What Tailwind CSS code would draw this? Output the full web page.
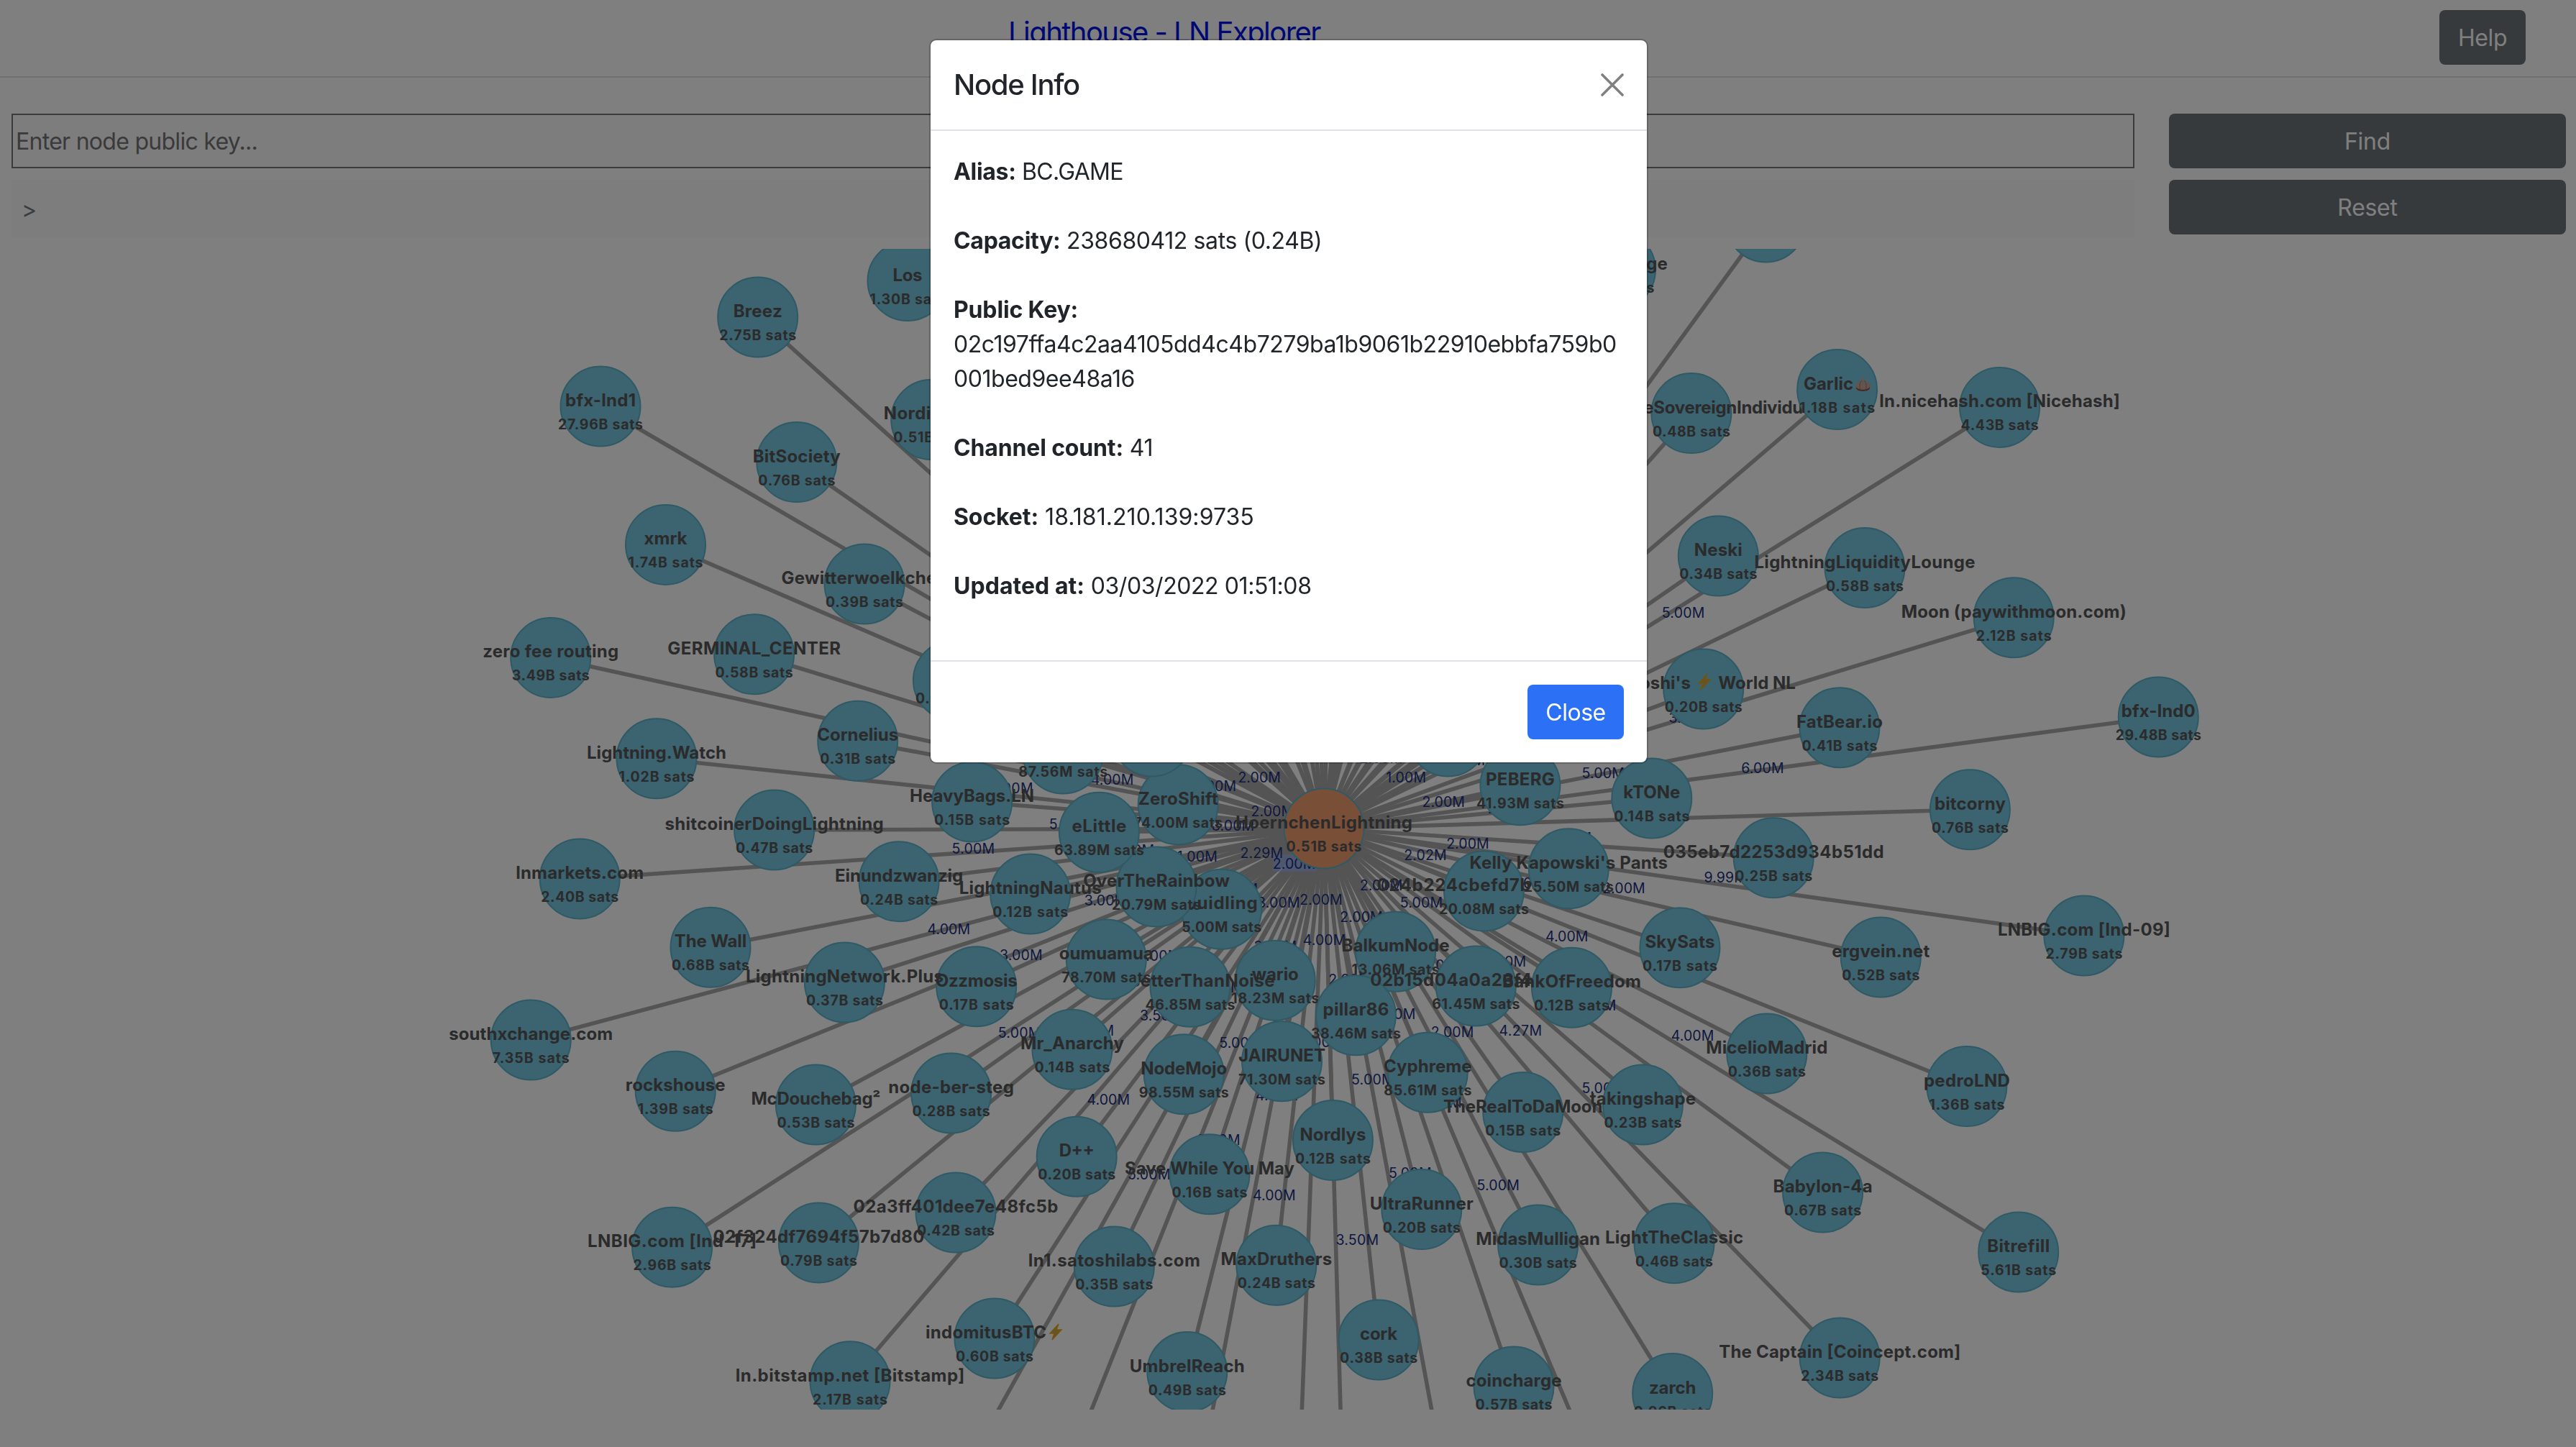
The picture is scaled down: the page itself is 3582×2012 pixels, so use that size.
<!DOCTYPE html>
<html lang="en">
<head>
<meta charset="utf-8">
<title>Lighthouse - LN Explorer</title>
<script src="https://cdn.jsdelivr.net/npm/@tailwindcss/browser@4"></script>
</head>
<body class="h-[2012px] w-[3582px] overflow-hidden bg-white font-['Inter',sans-serif] text-[32px] leading-[48px] text-[#212529]">
<header class="flex h-[108px] items-start border-b-2 border-[#e0e0e0] pr-[70px] pt-[14px]">
  <a id="title" class="ml-[1402px] mt-[7px] text-[40px] leading-[48px] tracking-[-1.55px] text-[#0010e8]">Lighthouse - LN Explorer</a>
  <button class="ml-auto h-[76px] w-[120px] rounded-[8px] bg-[#6e7579] pt-[2px] text-white tracking-[-0.4px]">Help</button>
</header>
<main class="pt-[50px]">
  <section class="flex gap-[48px] pl-[16px] pr-[14px]">
    <div class="flex w-[2952px] flex-col gap-4">
      <div class="flex h-[76px] items-center border-2 border-[#73777b] bg-[#fafafa] pl-[4px] pt-[2px] text-[#757575] tracking-[-0.72px]">Enter node public key...</div>
      <div class="flex h-[80px] items-center bg-[#fafafa] pl-[14px] pt-[3px] text-[#757a80] text-[32px]">&gt;</div>
    </div>
    <div class="flex flex-1 flex-col gap-4">
      <button class="h-[76px] rounded-[8px] bg-[#6e7579] pt-[2px] text-white tracking-[-0.3px]">Find</button>
      <button class="h-[76px] rounded-[8px] bg-[#6e7579] pt-[2px] text-white tracking-[-0.3px]">Reset</button>
    </div>
  </section>
  <svg id="graph" class="mt-4 block h-[1614px] w-[3582px] overflow-hidden" viewBox="0 346 3582 1614"></svg>
</main>

<div class="fixed inset-0 flex items-start justify-center bg-black/50 pl-[2px] pt-[54px]">
  <div class="flex w-[1000px] flex-col overflow-hidden rounded-[10px] border-2 border-black/20 bg-white bg-clip-padding">
    <div class="flex h-[126px] items-center justify-between border-b-2 border-[#dee2e6] px-[32px]">
      <h5 class="text-[40px] font-medium leading-[60px] tracking-[-1.3px]">Node Info</h5>
      <svg class="size-[32px] text-[#808080]" viewBox="0 0 32 32" fill="none" stroke="currentColor" stroke-width="3.6" stroke-linecap="round"><path d="M2 2L30 30M30 2L2 30"/></svg>
    </div>
    <div class="flex flex-col gap-[48px] p-[32px] pb-[79px] pt-[33px] tracking-[-0.3px]">
      <p class="tracking-[-0.65px]"><b class="font-bold tracking-[-0.3px]">Alias:</b> BC.GAME</p>
      <p class="tracking-[-0.4px]"><b class="font-bold tracking-[-0.3px]">Capacity:</b> 238680412 sats (0.24B)</p>
      <p class="whitespace-nowrap tracking-[-0.46px]"><b class="font-bold tracking-[-0.15px]">Public Key:</b><br>02c197ffa4c2aa4105dd4c4b7279ba1b9061b22910ebbfa759b0<br>001bed9ee48a16</p>
      <p><b class="font-bold tracking-[-0.15px]">Channel count:</b> 41</p>
      <p class="tracking-[0.05px]"><b class="font-bold tracking-[-0.1px]">Socket:</b> 18.181.210.139:9735</p>
      <p class="tracking-[-0.42px]"><b class="font-bold tracking-[0.05px]">Updated at:</b> 03/03/2022 01:51:08</p>
    </div>
    <div class="flex h-[142px] items-center justify-end border-t-2 border-[#dee2e6] px-[32px]">
      <button class="h-[76px] w-[134px] rounded-[8px] bg-[#2c70f6] pt-[2px] text-white tracking-[-0.5px]">Close</button>
    </div>
  </div>
</div>

<script>
// x, y, alias, capacity, channel label, alias width, options
const root = { x: 1841, y: 1152 };
const nodes = [
  [1053.7,441,'Breez','2.75B','5.00M',68],
  [1262,390.5,'Los','1.30B','5.00M',41],
  [835,565,'bfx-lnd1','27.96B','5.00M',98],
  [1294.7,583.4,'Nordicrails','0.51B','5.00M',132],
  [1107.8,642.6,'BitSociety','0.76B','5.00M',122],
  [925.5,757.4,'xmrk','1.74B','5.00M',60],
  [1202,812,'Gewitterwoelkchen','0.39B','5.00M',231],
  [1048.6,909.8,'GERMINAL_CENTER','0.58B','5.00M',240.6],
  [765.7,914.4,'zero fee routing','3.49B','5.00M',189],
  [1325.4,946,'','0.21B','2.00M',0],
  [1192.7,1030.2,'Cornelius','0.31B','4.00M',113],
  [913,1054.7,'Lightning.Watch','1.02B','5.00M',194],
  [2455.4,309,'','','5.00M',0],
  [2246.5,375,'Exchange','0.90B','5.00M',0,{end:2318.8}],
  [2351.9,574.6,'TheSovereignIndividual','0.48B','5.00M',272,{end:2527}],
  [2554.6,541.6,'Garlic','1.18B','5.00M',69,{start:2508,garlic:[2579,522]}],
  [2780.6,566.4,'ln.nicehash.com [Nicehash]','4.43B','5.00M',334.5],
  [2389.3,773,'Neski','0.34B','5.00M',67],
  [2593,789.5,'LightningLiquidityLounge','0.58B','5.00M',307],
  [2800.2,858.8,'Moon (paywithmoon.com)','2.12B','3.00M',313],
  [2368.7,958,"Satoshi's",'0.20B','5.00M',0,{end:2351,bolt:[2361,937],extra:['World NL',2389.3,107.5]}],
  [2557.9,1011.7,'FatBear.io','0.41B','5.00M',120],
  [3001.3,997,'bfx-lnd0','29.48B','6.00M',103],
  [2296.8,1110,'kTONe','0.14B','2.00M',79],
  [1076.6,1154,'shitcoinerDoingLightning','0.47B','5.00M',304],
  [806.2,1222,'lnmarkets.com','2.40B','5.00M',177.7],
  [1250.1,1225.7,'Einundzwanzig','0.24B','4.00M',178],
  [988,1317.3,'The Wall','0.68B','5.00M',100.5],
  [738.2,1446,'southxchange.com','7.35B','4.00M',228],
  [939.2,1517.2,'rockshouse','1.39B','3.00M',138.7],
  [1134.4,1536,'McDouchebag²','0.53B','5.00M',180],
  [1322.6,1520,'node-ber-steg','0.28B','5.00M',174.5],
  [1351.6,1115,'HeavyBags.LN','0.15B','5.00M',173],
  [1478.2,1048,'','87.56M','2.00M',0],
  [1638.2,1118.7,'ZeroShift','74.00M','2.00M',111],
  [1601.8,1024,'','','2.00M',0],
  [1432.7,1243,'LightningNautus','0.12B','1.00M',198],
  [1698.7,1264.3,'buidling','5.00M','2.00M',100,{selected:true}],
  [1608,1233,'OverTheRainbow','20.79M','2.29M',203.6],
  [1528.4,1157.3,'eLittle','63.89M','3.00M',76],
  [1773.3,1363.3,'wario','18.23M','2.00M',65],
  [1655,1372.3,'BetterThanNoise','46.85M','3.00M',203,{end:1772.5}],
  [1538.3,1334,'oumuamua','78.70M','4.00M',131],
  [1357.7,1371.7,'Ozzmosis','0.17B','3.00M',114],
  [1174.4,1366,'LightningNetwork.Plus','0.37B','3.00M',275],
  [1490.9,1459.3,'Mr_Anarchy','0.14B','4.00M',144],
  [1646.2,1493.7,'NodeMojo','98.55M','3.00M',120],
  [1782.5,1475.7,'JAIRUNET','71.30M','4.00M',121],
  [2013.3,1024,'','','1.00M',0],
  [2113.9,1091.7,'PEBERG','41.93M','2.00M',95.7],
  [2063.4,1239,'024b224cbefd7b6a0f1c','20.08M','2.02M',298],
  [2181.3,1207.7,"Kelly Kapowski's Pants",'25.50M','2.00M',275.5],
  [1940.6,1323.3,'BalkumNode','13.06M','2.00M',150],
  [1885.4,1411.7,'pillar86','38.46M','2.00M',92],
  [2052.3,1371,'02b15d04a0a26f4b1c7d','61.45M','5.00M',294],
  [2185.5,1373.3,'BankOfFreedom','0.12B','2.00M',193],
  [2335.9,1317.7,'SkySats','0.17B','2.00M',97],
  [1985.3,1491.3,'Cyphreme','85.61M','4.00M',122.5],
  [2117.7,1546.5,'TheRealToDaMoon','0.15B','5.00M',221.5],
  [2284.4,1536,'takingshape','0.23B','5.00M',147.5],
  [2739.4,1125.7,'bitcorny','0.76B','5.00M',99],
  [2466.2,1192.7,'035eb7d2253d934b51dd','0.25B','5.00M',307],
  [2615.3,1331,'ergvein.net','0.52B','2.00M',136],
  [2897.9,1301,'LNBIG.com [lnd-09]','2.79B','9.99M',240],
  [2456.8,1465,'MicelioMadrid','0.36B','4.00M',169],
  [2734.9,1510.6,'pedroLND','1.36B','5.00M',120],
  [2534.6,1658,'Babylon-4a','0.67B','5.00M',138],
  [2328,1728.7,'LightTheClassic','0.46B','4.27M',192],
  [2806.7,1741,'Bitrefill','5.61B','4.00M',87],
  [2558.2,1888,'The Captain [Coincept.com]','2.34B','5.00M',336],
  [2325.7,1937.5,'zarch','0.96B','5.00M',65.5],
  [1853.4,1585.5,'Nordlys','0.12B','2.00M',92],
  [1497.2,1608.3,'D++','0.20B','5.00M',49],
  [1682,1632.7,'Save While You May','0.16B','5.00M',236],
  [1976.8,1681.6,'UltraRunner','0.20B','5.00M',144],
  [2138.6,1731,'MidasMulligan','0.30B','2.00M',172.5],
  [1549.3,1761,'ln1.satoshilabs.com','0.35B','5.00M',239],
  [1774.8,1759.3,'MaxDruthers','0.24B','4.00M',154.6],
  [1917.1,1863,'cork','0.38B','5.00M',52],
  [1650.8,1907.5,'UmbrelReach','0.49B','4.00M',160],
  [2105,1928,'coincharge','0.57B','5.00M',133],
  [1329,1686,'02a3ff401dee7e48fc5b','0.42B','3.50M',285],
  [1138.4,1728,'02f324df7694f57b7d80','0.79B','5.00M',294],
  [934.6,1734.2,'LNBIG.com [lnd-17]','2.96B','5.00M',235],
  [1382.9,1861,'indomitusBTC','0.60B','5.00M',168,{start:1287,bolt:[1459,1841]}],
  [1182,1920.7,'ln.bitstamp.net [Bitstamp]','2.17B','4.00M',318.5],
  // peers past the lower edge of the canvas
  [1874,2309,'','','3.50M',0],[1643,2186,'','','4.00M',0],[1295,2127,'','','5.00M',0],
  [2021,2123.6,'','','5.00M',0],[2265.8,2158,'','','5.00M',0],[1489,2032,'','','5.00M',0],[1808,2022,'','','5.00M',0],
  // peers behind the dialog
  [2170,976,'','','2.00M',0],[1773,940,'','','2.00M',0],[1885,890,'','','2.00M',0],[1940,970,'','','2.00M',0],
  [2060,920,'','','2.00M',0],[2190,860,'','','2.00M',0],[1655,930,'','','2.00M',0],[1538,960,'','','2.00M',0],
  [1410,900,'','','2.00M',0],[1500,840,'','','2.00M',0],[1640,810,'','','2.00M',0],[1782,820,'','','2.00M',0],
  [1985,800,'','','2.00M',0],[2110,750,'','','2.00M',0],[1400,740,'','','2.00M',0],[1560,680,'','','2.00M',0],
  [1700,670,'','','2.00M',0],[1853,700,'','','2.00M',0],[1977,620,'','','2.00M',0],[2200,640,'','','2.00M',0],
  [1450,560,'','','2.00M',0],[1640,520,'','','2.00M',0],[1775,540,'','','2.00M',0],[1917,460,'','','2.00M',0],
  [2105,480,'','','2.00M',0],[1540,400,'','','2.00M',0],[1810,300,'','','2.00M',0],[2020,300,'','','2.00M',0]
];
const NS = 'http://www.w3.org/2000/svg', svg = document.getElementById('graph');
function add(tag, attrs, text) {
  const e = document.createElementNS(NS, tag);
  for (const k in attrs) e.setAttribute(k, attrs[k]);
  if (text) e.textContent = text;
  svg.appendChild(e);
  return e;
}
function label(text, x, y, anchor, cls, len) {
  const a = { x, y, 'text-anchor': anchor, class: cls };
  if (len) a.textLength = len;
  add('text', a, text);
}
const NAME = 'fill-[#565656] text-[24px] font-bold';
const CAP = 'fill-[#565656] text-[19.5px] font-bold';
const EDGE = 'fill-[#1c2f7e] text-[19.5px]';
nodes.forEach(n => add('line', { x1: root.x, y1: root.y, x2: n[0], y2: n[1], class: 'stroke-[#a8a8a8] stroke-[5.6px]' }));
nodes.forEach(n => {
  const mx = (root.x + n[0]) / 2, my = (root.y + n[1]) / 2;
  if (n[6] && n[6].selected) add('rect', { x: mx, y: my - 20, width: 61, height: 24, class: 'fill-[#96b4ff]/60' });
  label(n[4], mx, my, 'start', EDGE, n[4][0] === '1' ? 56 : 59.5);
});
function draw(x, y, name, cap, len, o, fill) {
  o = o || {};
  add('circle', { cx: x, cy: y, r: 55.5, class: fill + ' stroke-[#5cb4cc] stroke-[2px]' });
  if (name) label(name, o.start || o.end || x, y, o.start ? 'start' : o.end ? 'end' : 'middle', NAME, len);
  if (o.extra) label(o.extra[0], o.extra[1], y, 'start', NAME, o.extra[2]);
  if (cap) {
    const base = cap.endsWith('M') ? 111 : 108;
    const w = base + (cap.length === 6 ? 14 : 0) - (cap.includes('1') ? 3 : 0) - (cap.includes('7') ? 1 : 0) - (cap.length === 6 && cap.endsWith('B') ? 3 : 0);
    label(cap + ' sats', x, y + 32, 'middle', CAP, w);
  }
  if (o.bolt) add('path', { transform: `translate(${o.bolt[0]} ${o.bolt[1]})`, d: 'M13 0L1 13H7L4 22L17 8H10Z', class: 'fill-[#cfa94a] stroke-[#e6a817] stroke-[1.4px]' });
  if (o.garlic) {
    const t = `translate(${o.garlic[0]} ${o.garlic[1]})`;
    add('path', { transform: t, d: 'M11 0C12 5 13 7 17 9C22 11 24 16 20 20C17 23 6 23 3 20C-1 16 1 11 6 9C10 7 10.500 4 11 0Z', class: 'fill-[#c9a99a]' });
    add('path', { transform: t, d: 'M2 16C5 21 18 21 21 16C22 19 18 22 11.500 22C5 22 1 19 2 16Z', class: 'fill-[#80564c]' });
    add('path', { transform: t, d: 'M10 7C6 11 6 17 9 21M13 7C17 11 17 17 14 21', class: 'fill-none stroke-[#9a7468] stroke-[1px]' });
  }
}
draw(root.x, root.y, 'HoernchenLightning', '0.51B', 246, null, 'fill-[#f49e6e]');
nodes.forEach(n => draw(n[0], n[1], n[2], n[3], n[5], n[6], 'fill-[#78c6e0]'));
</script>
</body>
</html>
